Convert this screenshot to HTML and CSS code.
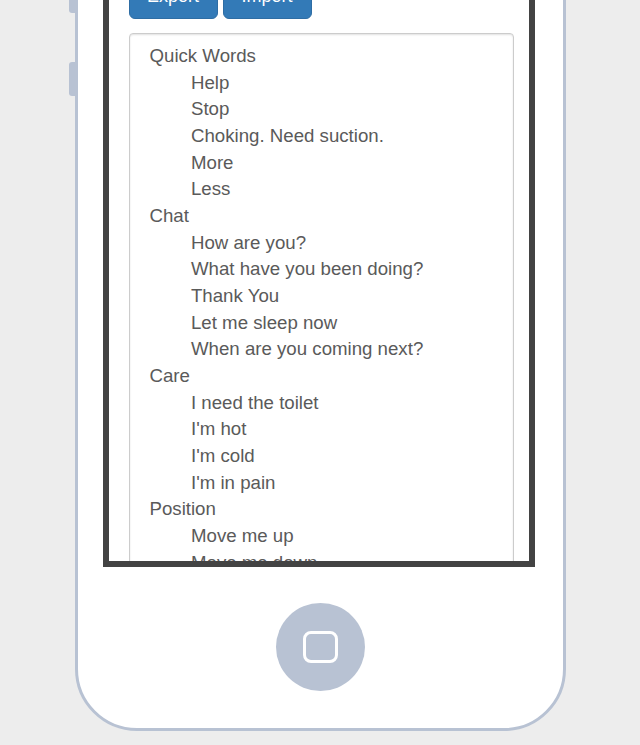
FILE: index.html
```html
<!DOCTYPE html>
<html>
<head>
<meta charset="utf-8">
<link rel="stylesheet" href="styles.css">
</head>
<body>
<div class="phone">
  <span class="side-btn side-btn-a"></span>
  <span class="side-btn side-btn-b"></span>
  <div class="screen">
    <div class="toolbar">
      <button class="btn">Export</button>
      <button class="btn">Import</button>
    </div>
    <div class="editor">Quick Words
	Help
	Stop
	Choking. Need suction.
	More
	Less
Chat
	How are you?
	What have you been doing?
	Thank You
	Let me sleep now
	When are you coming next?
Care
	I need the toilet
	I'm hot
	I'm cold
	I'm in pain
Position
	Move me up
	Move me down
	Turn me over
	Sit me up</div>
  </div>
  <div class="home-row">
    <div class="home-btn"><span class="home-square"></span></div>
  </div>
</div>
</body>
</html>
```

FILE: styles.css
```css
html, body {
  margin: 0;
  padding: 0;
  background: #ededed;
  overflow: hidden;
  height: 745px;
}

.phone {
  position: relative;
  box-sizing: border-box;
  width: 491px;
  margin: -150px auto 0;
  padding-top: 50px;
  background: #fff;
  border: 3px solid #b8c2d3;
  border-radius: 62px;
}

.side-btn {
  position: absolute;
  left: -9px;
  width: 6px;
  background: #b8c2d3;
  border-radius: 3px 0 0 3px;
}

.side-btn-a {
  top: 100px;
  height: 60px;
}

.side-btn-b {
  top: 209px;
  height: 34px;
}

.screen {
  box-sizing: border-box;
  width: 432px;
  height: 664px;
  margin-left: 25px;
  border: 6px solid #434343;
  padding: 64px 15px 0 20px;
  overflow: hidden;
  background: #fff;
}

.toolbar {
  display: flex;
  gap: 5px;
}

.btn {
  box-sizing: border-box;
  height: 46px;
  width: 89px;
  padding: 10px 0;
  font-family: "Liberation Sans", Arial, sans-serif;
  font-size: 18px;
  line-height: 24px;
  color: #fff;
  background: #337ab7;
  border: 1px solid #2e6da4;
  border-radius: 6px;
}

.editor {
  margin-top: 14px;
  width: 385px;
  box-sizing: border-box;
  height: 700px;
  padding: 9px 20px;
  border: 1px solid #ccc;
  border-radius: 4px;
  box-shadow: inset 0 1px 2px rgba(0, 0, 0, 0.12);
  font-family: "Liberation Sans", Arial, sans-serif;
  font-size: 18.67px;
  line-height: 26.67px;
  color: #5a5a5a;
  white-space: pre;
  tab-size: 8;
  -moz-tab-size: 8;
}

.home-row {
  display: flex;
  justify-content: center;
  padding: 36px 0 37px;
}

.home-btn {
  width: 89px;
  height: 88px;
  border-radius: 50%;
  background: #b8c2d3;
  display: flex;
  align-items: center;
  justify-content: center;
}

.home-square {
  box-sizing: border-box;
  width: 35px;
  height: 32px;
  border: 3px solid #fff;
  border-radius: 8px;
}
```
